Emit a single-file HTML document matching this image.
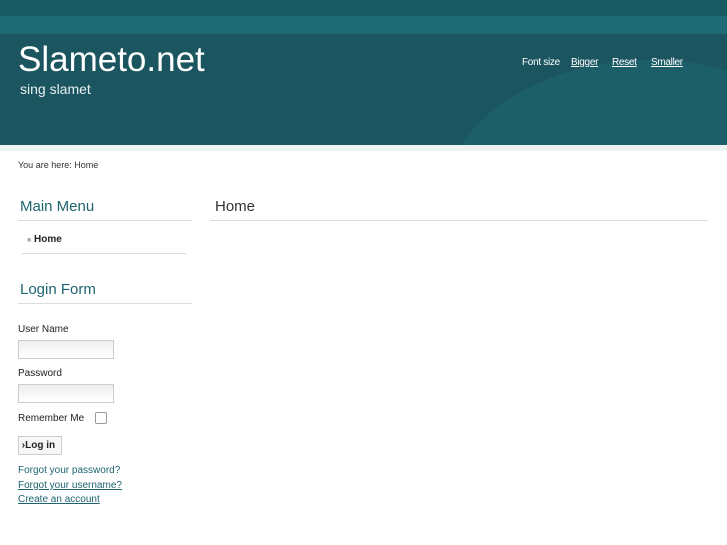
<!DOCTYPE html>
<html><head><meta charset="utf-8"><style>
body{margin:0;width:727px;height:545px;background:#fff;font-family:"Liberation Sans",sans-serif;position:relative;overflow:hidden}
.hdr{position:absolute;left:0;top:0;width:727px;height:145px;background:#1a5560;overflow:hidden}
.b1{position:absolute;left:0;top:0;width:727px;height:16px;background:#1a5a63}
.b2{position:absolute;left:0;top:16px;width:727px;height:18px;background:#1f6b75}
.glow{position:absolute;left:440px;top:60px;width:420px;height:300px;border-radius:50%;background:#1c5f69}
.shade{position:absolute;left:0;top:145px;width:727px;height:6px;background:#eef2f2}
.t{position:absolute;color:#fff}
.abs{position:absolute}
h3{position:absolute;margin:0;font-weight:normal;color:#1d6470;font-size:15px;border-bottom:1px solid #ddd;padding-bottom:5px}
.lbl{position:absolute;font-size:10px;color:#222}
.in{position:absolute;left:18px;width:94px;height:17px;border:1px solid #ccc;background:linear-gradient(#eee,#fff)}
.lk{position:absolute;left:18px;font-size:10px;color:#1d6470}
.fs{position:absolute;top:57px;font-size:10px;color:#fff;letter-spacing:-.3px}
</style></head><body>
<div class="hdr"><div class="glow"></div><div class="b1"></div><div class="b2"></div>
<div class="t" style="left:18px;top:40px;font-size:35px">Slameto.net</div>
<div class="t" style="left:20px;top:81px;font-size:14px;color:#e8f0f0">sing slamet</div>
<div class="fs" style="left:522px">Font size</div>
<div class="fs" style="left:571px;text-decoration:underline">Bigger</div>
<div class="fs" style="left:612px;text-decoration:underline">Reset</div>
<div class="fs" style="left:651px;text-decoration:underline">Smaller</div>
</div>
<div class="shade"></div>
<div class="abs" style="left:18px;top:160px;font-size:9px;color:#333">You are here: Home</div>
<h3 style="left:18px;top:198px;width:172px;padding-left:2px">Main Menu</h3>
<h3 style="left:210px;top:198px;width:493px;padding-left:5px;color:#333">Home</h3>
<div class="abs" style="left:27px;top:234px;font-size:10px;font-weight:bold;color:#222"><span style="color:#aaa;font-size:7px">■</span> Home</div>
<div class="abs" style="left:22px;top:253px;width:164px;border-top:1px solid #ddd"></div>
<h3 style="left:18px;top:281px;width:172px;padding-left:2px">Login Form</h3>
<div class="lbl" style="left:18px;top:324px">User Name</div>
<div class="in" style="top:340px"></div>
<div class="lbl" style="left:18px;top:368px">Password</div>
<div class="in" style="top:384px"></div>
<div class="lbl" style="left:18px;top:413px">Remember Me</div>
<div class="abs" style="left:95px;top:412px;width:10px;height:10px;border:1px solid #999;border-radius:2px"></div>
<div class="abs" style="left:18px;top:436px;width:42px;height:17px;border:1px solid #ccc;background:#f7f7f7;font-size:10px;font-weight:bold;line-height:17px;color:#222">&nbsp;›Log in</div>
<div class="lk" style="top:465px">Forgot your password?</div>
<div class="lk" style="top:480px;text-decoration:underline">Forgot your username?</div>
<div class="lk" style="top:494px;text-decoration:underline">Create an account</div>
</body></html>
